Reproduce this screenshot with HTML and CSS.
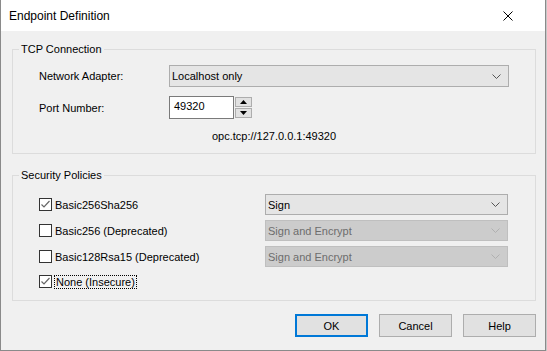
FILE: index.html
```html
<!DOCTYPE html>
<html lang="en">

<head>
    <meta charset="UTF-8">
    <meta name="viewport" content="width=device-width, initial-scale=1.0">
    <title>Endpoint Definition</title>
    <link rel="stylesheet" href="styles.css">
</head>

<body>
    <div class="window">
        <div class="titlebar">
            <span class="title">Endpoint Definition</span>
            <svg class="close" width="10" height="10" viewBox="0 0 10 10">
                <path d="M0.5 0.5 L9.5 9.5 M9.5 0.5 L0.5 9.5" stroke="#000" stroke-width="1" fill="none" />
            </svg>
        </div>

        <div class="content">
            <fieldset class="group">
                <legend>TCP Connection</legend>
                <div class="group-body tcp">
                    <div class="form-grid">
                        <label>Network Adapter:</label>
                        <div class="combo">
                            <span>Localhost only</span>
                            <svg class="chevron" width="9" height="5" viewBox="0 0 9 5">
                                <polyline points="0.5,0.5 4.5,4.5 8.5,0.5" fill="none" stroke="#555" />
                            </svg>
                        </div>

                        <label>Port Number:</label>
                        <div class="spin-field">
                            <div class="spin-input">49320</div>
                            <div class="spin-buttons">
                                <div class="spin-btn">
                                    <svg width="7" height="4" viewBox="0 0 7 4"><polygon points="3.5,0 7,4 0,4" fill="#000" /></svg>
                                </div>
                                <div class="spin-btn">
                                    <svg width="7" height="4" viewBox="0 0 7 4"><polygon points="0,0 7,0 3.5,4" fill="#000" /></svg>
                                </div>
                            </div>
                        </div>
                    </div>
                    <p class="endpoint-url">opc.tcp://127.0.0.1:49320</p>
                </div>
            </fieldset>

            <fieldset class="group security">
                <legend>Security Policies</legend>
                <div class="group-body policies">
                    <div class="policy">
                        <span class="check checked">
                            <svg width="11" height="11" viewBox="0 0 11 11"><polyline points="1.5,5.5 4,8 9.5,2" fill="none" stroke="#666" stroke-width="1.2" /></svg>
                        </span>
                        <span>Basic256Sha256</span>
                    </div>
                    <div class="combo">
                        <span>Sign</span>
                        <svg class="chevron" width="9" height="5" viewBox="0 0 9 5">
                            <polyline points="0.5,0.5 4.5,4.5 8.5,0.5" fill="none" stroke="#555" />
                        </svg>
                    </div>

                    <div class="policy">
                        <span class="check"></span>
                        <span>Basic256 (Deprecated)</span>
                    </div>
                    <div class="combo disabled">
                        <span>Sign and Encrypt</span>
                        <svg class="chevron" width="9" height="5" viewBox="0 0 9 5">
                            <polyline points="0.5,0.5 4.5,4.5 8.5,0.5" fill="none" stroke="#b0b0b0" />
                        </svg>
                    </div>

                    <div class="policy">
                        <span class="check"></span>
                        <span>Basic128Rsa15 (Deprecated)</span>
                    </div>
                    <div class="combo disabled">
                        <span>Sign and Encrypt</span>
                        <svg class="chevron" width="9" height="5" viewBox="0 0 9 5">
                            <polyline points="0.5,0.5 4.5,4.5 8.5,0.5" fill="none" stroke="#b0b0b0" />
                        </svg>
                    </div>

                    <div class="policy last">
                        <span class="check checked">
                            <svg width="11" height="11" viewBox="0 0 11 11"><polyline points="1.5,5.5 4,8 9.5,2" fill="none" stroke="#666" stroke-width="1.2" /></svg>
                        </span>
                        <span class="focused">None (Insecure)</span>
                    </div>
                </div>
            </fieldset>

            <div class="buttons">
                <button class="btn default">OK</button>
                <button class="btn">Cancel</button>
                <button class="btn">Help</button>
            </div>
        </div>
    </div>
</body>

</html>
```

FILE: styles.css
```css
:root {
    --dialog-bg: #f0f0f0;
    --group-border: #dcdcdc;
    --control-border: #adadad;
    --combo-bg: #e5e5e5;
    --button-bg: #e1e1e1;
    --disabled-bg: #cccccc;
    --disabled-border: #bfbfbf;
    --disabled-text: #6d6d6d;
    --accent: #0078d7;
}

body {
    margin: 0;
    background-color: #c8c8c8;
    font-family: 'Liberation Sans', Arial, sans-serif;
    font-size: 11px;
    color: #000;
}

.window {
    box-sizing: border-box;
    width: 546px;
    height: 351px;
    background-color: var(--dialog-bg);
    border-left: 1px solid #8a8a8a;
    border-right: 1px solid #8a8a8a;
    border-bottom: 1px solid #8a8a8a;
}

.titlebar {
    height: 31px;
    background-color: #fff;
    display: flex;
    align-items: center;
    justify-content: space-between;
    padding-left: 8px;
}

.title {
    font-size: 12px;
}

.close {
    margin-right: 32px;
}

.content {
    padding: 0 9px 0 11px;
}

.group {
    margin: 12px 0 0 0;
    padding: 0;
    border: 1px solid var(--group-border);
}

.group legend {
    margin-left: 6px;
    padding: 0 2px;
    line-height: 13px;
}

.group.security {
    margin-top: 15px;
}

.group-body.tcp {
    padding: 9px 0 10px 26px;
}

.form-grid {
    display: grid;
    grid-template-columns: 130px 340px;
    grid-template-rows: 22px 23px;
    row-gap: 9px;
    align-items: center;
}

.combo {
    box-sizing: border-box;
    height: 22px;
    border: 1px solid var(--control-border);
    background-color: var(--combo-bg);
    display: flex;
    align-items: center;
    justify-content: space-between;
    padding: 0 7px 0 2px;
}

.combo.disabled {
    background-color: var(--disabled-bg);
    border-color: var(--disabled-border);
    color: var(--disabled-text);
}

.spin-field {
    display: flex;
    align-items: center;
    gap: 1px;
}

.spin-input {
    box-sizing: border-box;
    width: 65px;
    height: 23px;
    background-color: #fff;
    border: 1px solid #7a7a7a;
    padding: 3px 4px;
}

.spin-buttons {
    display: flex;
    flex-direction: column;
    gap: 1px;
}

.spin-btn {
    box-sizing: border-box;
    width: 17px;
    height: 10px;
    background-color: var(--button-bg);
    border: 1px solid var(--control-border);
    display: flex;
    align-items: center;
    justify-content: center;
}

.endpoint-url {
    margin: 11px 0 0 -26px;
    text-align: center;
    line-height: 13px;
}

.policies {
    display: grid;
    grid-template-columns: 226px 243px;
    grid-template-rows: 21px 21px 21px 19px;
    row-gap: 5px;
    align-items: center;
    padding: 12px 0 9px 26px;
}

.policy {
    display: flex;
    align-items: center;
    gap: 3px;
}

.combo.disabled,
.policies .combo {
    height: 21px;
}

.check {
    box-sizing: border-box;
    width: 13px;
    height: 13px;
    border: 1px solid #333;
    background-color: #fff;
    display: flex;
    align-items: center;
    justify-content: center;
}

.focused {
    outline: 1px dotted #000;
    padding: 0 1px;
}

.buttons {
    display: flex;
    justify-content: flex-end;
    gap: 11px;
    margin-top: 13px;
}

.btn {
    box-sizing: border-box;
    width: 73px;
    height: 23px;
    font-family: inherit;
    font-size: 11px;
    background-color: var(--button-bg);
    border: 1px solid var(--control-border);
    padding: 0;
    color: #000;
}

.btn.default {
    border: 2px solid var(--accent);
}
```
